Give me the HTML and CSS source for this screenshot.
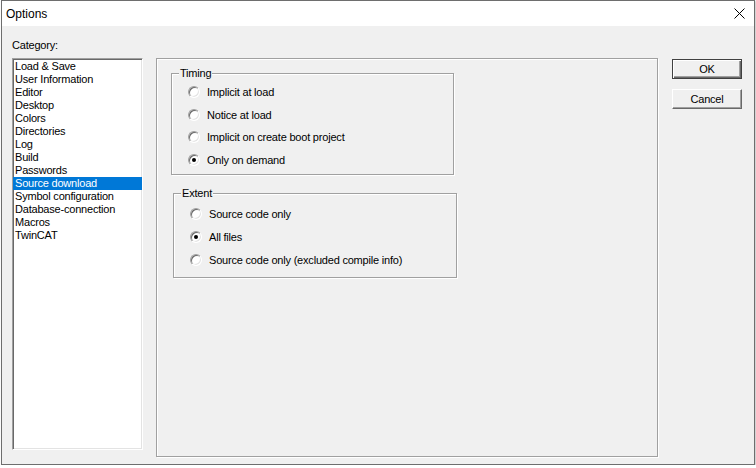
FILE: index.html
```html
<!DOCTYPE html>
<html lang="en">
<head>
    <meta charset="UTF-8">
    <meta name="viewport" content="width=device-width, initial-scale=1.0">
    <title>Options</title>
    <link rel="stylesheet" href="styles.css">
</head>
<body>
    <div class="window">
        <div class="titlebar">
            <span class="title">Options</span>
            <svg class="close" width="11" height="11" viewBox="0 0 11 11">
                <path d="M0.5 0.5 L10.5 10.5 M10.5 0.5 L0.5 10.5" stroke="#000" stroke-width="1" fill="none"/>
            </svg>
        </div>
        <div class="client">
            <div class="category">
                <div class="caption">Category:</div>
                <ul class="listbox">
                    <li>Load &amp; Save</li>
                    <li>User Information</li>
                    <li>Editor</li>
                    <li>Desktop</li>
                    <li>Colors</li>
                    <li>Directories</li>
                    <li>Log</li>
                    <li>Build</li>
                    <li>Passwords</li>
                    <li class="selected">Source download</li>
                    <li>Symbol configuration</li>
                    <li>Database-connection</li>
                    <li>Macros</li>
                    <li>TwinCAT</li>
                </ul>
            </div>

            <div class="page">
                <div class="group timing">
                    <span class="group-title">Timing</span>
                    <label class="radio"><input type="radio" name="timing"><span>Implicit at load</span></label>
                    <label class="radio"><input type="radio" name="timing"><span>Notice at load</span></label>
                    <label class="radio"><input type="radio" name="timing"><span>Implicit on create boot project</span></label>
                    <label class="radio"><input type="radio" name="timing" checked><span>Only on demand</span></label>
                </div>
                <div class="group extent">
                    <span class="group-title">Extent</span>
                    <label class="radio"><input type="radio" name="extent"><span>Source code only</span></label>
                    <label class="radio"><input type="radio" name="extent" checked><span>All files</span></label>
                    <label class="radio"><input type="radio" name="extent"><span>Source code only (excluded compile info)</span></label>
                </div>
            </div>

            <div class="buttons">
                <button class="btn default">OK</button>
                <button class="btn">Cancel</button>
            </div>
        </div>
    </div>
</body>
</html>
```

FILE: styles.css
```css
body {
    margin: 0;
    background-color: #fff;
    font-family: "Liberation Sans", Arial, sans-serif;
    font-size: 11px;
    letter-spacing: -0.2px;
    color: #000;
}
.window {
    width: 754px;
    height: 465px;
    margin-left: 1px;
    box-sizing: border-box;
    border: 1px solid #6e6e6e;
    box-shadow: 1px 1px 2px rgba(0, 0, 0, 0.25);
    display: flex;
    flex-direction: column;
}
.titlebar {
    height: 25px;
    background-color: #fff;
    display: flex;
    align-items: center;
    justify-content: space-between;
    padding: 0 9px 0 4px;
}
.title {
    font-size: 12px;
    letter-spacing: 0;
}
.close {
    display: block;
}
.client {
    flex: 1;
    display: flex;
    align-items: flex-start;
    background-color: #f0f0f0;
    padding: 13px 12px 7px 10px;
}
.category {
    width: 131px;
    display: flex;
    flex-direction: column;
}
.caption {
    line-height: 13px;
    margin-bottom: 6px;
}
.listbox {
    list-style: none;
    margin: 0;
    padding: 1px 0 0;
    height: 392px;
    box-sizing: border-box;
    background-color: #fff;
    border: 1px solid;
    border-color: #a0a0a0 #fff #fff #a0a0a0;
    box-shadow: inset 1px 1px 0 #696969, inset -1px -1px 0 #e3e3e3;
}
.listbox li {
    line-height: 13px;
    height: 13px;
    padding-left: 2px;
    white-space: nowrap;
}
.listbox .selected {
    background-color: #0078d7;
    color: #fff;
}
.page {
    width: 502px;
    height: 399px;
    box-sizing: border-box;
    margin: 19px 0 0 13px;
    padding: 14px;
    border: 1px solid #a0a0a0;
    box-shadow: inset 1px 1px 0 #fff, 1px 1px 0 #fff;
}
.group {
    position: relative;
    box-sizing: border-box;
    border: 1px solid #a0a0a0;
    box-shadow: inset 1px 1px 0 #fff, 1px 1px 0 #fff;
    padding-left: 16px;
}
.group-title {
    position: absolute;
    top: -7px;
    left: 7px;
    padding: 0 1px;
    line-height: 13px;
    background-color: #f0f0f0;
}
.timing {
    width: 283px;
    height: 102px;
    padding-top: 7px;
}
.timing .radio {
    height: 22.5px;
}
.extent {
    width: 284px;
    height: 85px;
    margin: 18px 0 0 2px;
    padding-top: 8px;
}
.extent .radio {
    height: 23px;
}
.radio {
    display: flex;
    align-items: center;
    gap: 7px;
}
.radio input {
    appearance: none;
    margin: 0;
    width: 12px;
    height: 12px;
    box-sizing: border-box;
    border-radius: 50%;
    border: 1px solid;
    border-color: #a0a0a0 #fff #fff #a0a0a0;
    box-shadow: inset 1px 1px 0 #696969, inset -1px -1px 0 #e3e3e3;
    background-color: #fff;
    position: relative;
}
.radio input:checked::after {
    content: "";
    position: absolute;
    left: 3px;
    top: 3px;
    width: 4px;
    height: 4px;
    border-radius: 50%;
    background-color: #000;
}
.buttons {
    margin: 20px 0 0 14px;
    display: flex;
    flex-direction: column;
    gap: 10px;
}
.btn {
    width: 70px;
    height: 20px;
    padding: 0;
    font-family: inherit;
    font-size: 11px;
    letter-spacing: -0.2px;
    color: #000;
    background-color: #f0f0f0;
    border: 1px solid;
    border-color: #fff #696969 #696969 #fff;
    box-shadow: inset -1px -1px 0 #a0a0a0;
}
.btn.default {
    border-color: #404040;
    box-shadow: inset 1px 1px 0 #fff, inset -1px -1px 0 #696969, inset -2px -2px 0 #a0a0a0;
}
```
